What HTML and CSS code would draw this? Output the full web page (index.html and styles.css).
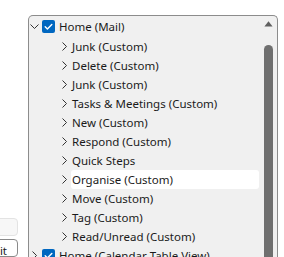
FILE: index.html
```html
<!DOCTYPE html>
<html>
<head>
<meta charset="utf-8">
<link rel="stylesheet" href="styles.css">
</head>
<body>
<div class="page">
  <div class="side">
    <div class="btn"></div>
    <div class="field"><span>it</span></div>
  </div>
  <div class="panel">
    <div class="tree">
      <div class="row top">
        <svg class="chev-d" width="9" height="5" viewBox="0 0 9 5"><polyline points="0.5,0.5 4.5,4.5 8.5,0.5" fill="none" stroke="#333" stroke-width="1"/></svg>
        <span class="cb"><svg width="13" height="13" viewBox="0 0 13 13"><polyline points="3.2,6.8 5.4,9 9.8,4.4" fill="none" stroke="#fff" stroke-width="1.4" stroke-linecap="round" stroke-linejoin="round"/></svg></span>
        <span class="lbl">Home (Mail)</span>
      </div>
      <div class="row child"><svg class="chev-r" width="5" height="9" viewBox="0 0 5 9"><polyline points="0.5,0.5 4.5,4.5 0.5,8.5" fill="none" stroke="#333" stroke-width="1"/></svg><span class="lbl">Junk (Custom)</span></div>
      <div class="row child"><svg class="chev-r" width="5" height="9" viewBox="0 0 5 9"><polyline points="0.5,0.5 4.5,4.5 0.5,8.5" fill="none" stroke="#333" stroke-width="1"/></svg><span class="lbl">Delete (Custom)</span></div>
      <div class="row child"><svg class="chev-r" width="5" height="9" viewBox="0 0 5 9"><polyline points="0.5,0.5 4.5,4.5 0.5,8.5" fill="none" stroke="#333" stroke-width="1"/></svg><span class="lbl">Junk (Custom)</span></div>
      <div class="row child"><svg class="chev-r" width="5" height="9" viewBox="0 0 5 9"><polyline points="0.5,0.5 4.5,4.5 0.5,8.5" fill="none" stroke="#333" stroke-width="1"/></svg><span class="lbl">Tasks &amp; Meetings (Custom)</span></div>
      <div class="row child"><svg class="chev-r" width="5" height="9" viewBox="0 0 5 9"><polyline points="0.5,0.5 4.5,4.5 0.5,8.5" fill="none" stroke="#333" stroke-width="1"/></svg><span class="lbl">New (Custom)</span></div>
      <div class="row child"><svg class="chev-r" width="5" height="9" viewBox="0 0 5 9"><polyline points="0.5,0.5 4.5,4.5 0.5,8.5" fill="none" stroke="#333" stroke-width="1"/></svg><span class="lbl">Respond (Custom)</span></div>
      <div class="row child"><svg class="chev-r" width="5" height="9" viewBox="0 0 5 9"><polyline points="0.5,0.5 4.5,4.5 0.5,8.5" fill="none" stroke="#333" stroke-width="1"/></svg><span class="lbl">Quick Steps</span></div>
      <div class="row child"><svg class="chev-r" width="5" height="9" viewBox="0 0 5 9"><polyline points="0.5,0.5 4.5,4.5 0.5,8.5" fill="none" stroke="#333" stroke-width="1"/></svg><span class="lbl sel">Organise (Custom)</span></div>
      <div class="row child"><svg class="chev-r" width="5" height="9" viewBox="0 0 5 9"><polyline points="0.5,0.5 4.5,4.5 0.5,8.5" fill="none" stroke="#333" stroke-width="1"/></svg><span class="lbl">Move (Custom)</span></div>
      <div class="row child"><svg class="chev-r" width="5" height="9" viewBox="0 0 5 9"><polyline points="0.5,0.5 4.5,4.5 0.5,8.5" fill="none" stroke="#333" stroke-width="1"/></svg><span class="lbl">Tag (Custom)</span></div>
      <div class="row child"><svg class="chev-r" width="5" height="9" viewBox="0 0 5 9"><polyline points="0.5,0.5 4.5,4.5 0.5,8.5" fill="none" stroke="#333" stroke-width="1"/></svg><span class="lbl">Read/Unread (Custom)</span></div>
      <div class="row top2">
        <svg class="chev-r2" width="5" height="9" viewBox="0 0 5 9"><polyline points="0.5,0.5 4.5,4.5 0.5,8.5" fill="none" stroke="#333" stroke-width="1"/></svg>
        <span class="cb"><svg width="13" height="13" viewBox="0 0 13 13"><polyline points="3.2,6.8 5.4,9 9.8,4.4" fill="none" stroke="#fff" stroke-width="1.4" stroke-linecap="round" stroke-linejoin="round"/></svg></span>
        <span class="lbl">Home (Calendar Table View)</span>
      </div>
    </div>
    <div class="scroll">
      <svg class="arrow" width="9" height="6" viewBox="0 0 9 6"><polygon points="4.5,0.3 8.6,5.6 0.4,5.6" fill="#606060"/></svg>
      <div class="thumb"></div>
    </div>
  </div>
</div>
</body>
</html>
```

FILE: styles.css
```css
html, body {
  margin: 0;
  padding: 0;
  background: #ffffff;
}
body {
  font-family: "Noto Sans", "Open Sans", sans-serif;
  font-size: 11.5px;
  color: #1a1a1a;
}
.page {
  display: flex;
  height: 257px;
  overflow: hidden;
}
.side {
  flex: none;
  width: 28px;
  display: flex;
  flex-direction: column;
  gap: 3px;
  padding-top: 218px;
  box-sizing: border-box;
}
.btn {
  margin-left: -10px;
  width: 28px;
  height: 24px;
  box-sizing: border-box;
  border: 1px solid #e3e3e3;
  border-radius: 4px;
  background: #f7f7f7;
}
.field {
  margin-left: -10px;
  width: 28px;
  height: 24px;
  box-sizing: border-box;
  border: 1px solid #8a8a8a;
  border-radius: 4px;
  background: #ffffff;
  display: flex;
  justify-content: flex-end;
  padding-right: 10px;
  padding-top: 3px;
  overflow: hidden;
}
.panel {
  flex: none;
  margin-top: 15px;
  width: 250px;
  height: 260px;
  box-sizing: border-box;
  border: 1px solid #8c8c8c;
  border-bottom: none;
  border-radius: 5px 5px 0 0;
  background: #f0f0f0;
  display: flex;
}
.tree {
  flex: 1;
  display: flex;
  flex-direction: column;
}
.row {
  flex: none;
  height: 19px;
  display: flex;
  align-items: center;
  white-space: nowrap;
}
.top {
  height: 21px;
  padding-left: 1px;
}
.top2 {
  padding-left: 3px;
}
.chev-d {
  flex: none;
  margin-right: 3px;
}
.chev-r2 {
  flex: none;
  margin-right: 5px;
}
.cb {
  flex: none;
  width: 13px;
  height: 13px;
  border-radius: 2px;
  background: #0067c0;
  display: flex;
  margin-right: 3px;
}
.child {
  padding-left: 33px;
}
.chev-r {
  flex: none;
  margin-right: 4px;
}
.lbl {
  line-height: 19px;
  padding-left: 1px;
}
.child .lbl {
  flex: 1;
  border-radius: 3px;
}
.lbl.sel {
  background: #ffffff;
}
.scroll {
  flex: none;
  width: 18px;
  box-sizing: border-box;
  padding-left: 5px;
  padding-top: 5px;
  display: flex;
  flex-direction: column;
}
.arrow {
  flex: none;
}
.thumb {
  margin-top: 18px;
  width: 9px;
  flex: 1;
  background: #6f6f6f;
  border-radius: 4.5px 4.5px 0 0;
}
```
